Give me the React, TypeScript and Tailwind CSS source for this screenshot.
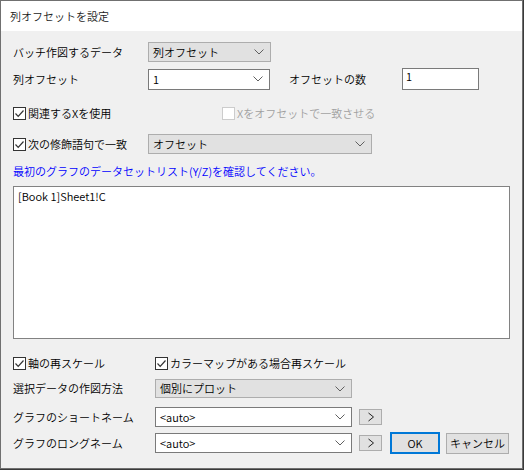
import React from "react";

const font = { fontFamily: '"Noto Sans CJK JP", "Noto Sans", sans-serif' };

function Chevron() {
  return (
    <svg width="10" height="6" viewBox="0 0 10 6" className="shrink-0">
      <polyline points="0.5,0.5 5,5 9.5,0.5" fill="none" stroke="#606060" strokeWidth="1" />
    </svg>
  );
}

function Select({ value, gray, w, h }: { value: string; gray?: boolean; w: string; h: string }) {
  return (
    <div
      className={`${w} ${h} flex items-center justify-between pl-[4px] pr-[6px] border ${
        gray ? "bg-[#e1e1e1] border-[#adadad]" : "bg-white border-[#7a7a7a]"
      }`}
    >
      <span className="leading-none">{value}</span>
      <Chevron />
    </div>
  );
}

function Check({ checked = true, disabled = false }: { checked?: boolean; disabled?: boolean }) {
  return (
    <div
      className={`w-[13px] h-[13px] shrink-0 border flex items-center justify-center bg-white ${
        disabled ? "border-[#cccccc]" : "border-[#333333]"
      }`}
    >
      {checked && (
        <svg width="11" height="11" viewBox="0 0 11 11">
          <polyline points="1.5,5.5 4.2,8.3 9.5,2.5" fill="none" stroke="#333333" strokeWidth="1.2" />
        </svg>
      )}
    </div>
  );
}

function Arrow() {
  return (
    <div className="w-[23px] h-[16px] ml-[7px] bg-[#e1e1e1] border border-[#adadad] flex items-center justify-center">
      <svg width="8" height="10" viewBox="0 0 8 10">
        <polyline points="1.5,1 6.5,5 1.5,9" fill="none" stroke="#222" strokeWidth="1" />
      </svg>
    </div>
  );
}

export default function App() {
  return (
    <div className="w-[524px] h-[470px] bg-[#3a3a3a] font-[350]" style={font}>
      <div className="w-[523px] h-[469px] border border-[#707070] flex flex-col text-[11px] text-black">
        <div className="h-[30px] shrink-0 bg-white flex items-center pl-[9px] text-[11px] text-[#1a1a1a]">
          列オフセットを設定
        </div>
        <div className="flex-1 bg-[#f0f0f0] pl-[12px] flex flex-col">
          {/* row 1 */}
          <div className="mt-[11px] h-[20px] flex items-center">
            <div className="w-[135px]">バッチ作図するデータ</div>
            <Select value="列オフセット" gray w="w-[123px]" h="h-[20px]" />
          </div>
          {/* row 2 */}
          <div className="mt-[6px] h-[22px] flex items-center">
            <div className="w-[135px]">列オフセット</div>
            <Select value="1" w="w-[122px]" h="h-[21px]" />
            <div className="ml-[19px] w-[113px]">オフセットの数</div>
            <div className="w-[77px] h-[22px] bg-white border border-[#7a7a7a] pl-[3px] leading-[14px]">1</div>
          </div>
          {/* row 3 */}
          <div className="mt-[14px] h-[18px] flex items-center">
            <Check />
            <span className="ml-[2px] w-[194px]">関連するXを使用</span>
            <Check checked={false} disabled />
            <span className="ml-[2px] text-[#a0a0a0]">Xをオフセットで一致させる</span>
          </div>
          {/* row 4 */}
          <div className="mt-[12px] h-[20px] flex items-center">
            <Check />
            <span className="ml-[2px] w-[120px]">次の修飾語句で一致</span>
            <Select value="オフセット" gray w="w-[224px]" h="h-[20px]" />
          </div>
          <div className="mt-[9px] h-[16px] flex items-center text-[#0000ff]">
            最初のグラフのデータセットリスト(Y/Z)を確認してください。
          </div>
          <div className="mt-[7px] w-[497px] h-[153px] bg-white border border-[#828282] pl-[4px] pt-[1px] leading-[16px]">
            [Book 1]Sheet1!C
          </div>
          {/* checks */}
          <div className="mt-[15px] h-[18px] flex items-center">
            <Check />
            <span className="ml-[2px] w-[127px]">軸の再スケール</span>
            <Check />
            <span className="ml-[2px]">カラーマップがある場合再スケール</span>
          </div>
          <div className="mt-[7px] h-[19px] flex items-center">
            <div className="w-[142px]">選択データの作図方法</div>
            <Select value="個別にプロット" gray w="w-[197px]" h="h-[19px]" />
          </div>
          <div className="mt-[9px] h-[20px] flex items-center">
            <div className="w-[142px]">グラフのショートネーム</div>
            <Select value="<auto>" w="w-[197px]" h="h-[20px]" />
            <Arrow />
          </div>
          <div className="mt-[5px] h-[22px] flex items-center">
            <div className="w-[142px]">グラフのロングネーム</div>
            <Select value="<auto>" w="w-[197px]" h="h-[20px]" />
            <Arrow />
            <div className="ml-[8px] w-[50px] h-[22px] bg-[#e1e1e1] border-2 border-[#0078d7] flex items-center justify-center">
              OK
            </div>
            <div className="ml-[6px] w-[63px] h-[21px] bg-[#e1e1e1] border border-[#adadad] flex items-center justify-center">
              キャンセル
            </div>
          </div>
        </div>
      </div>
    </div>
  );
}
